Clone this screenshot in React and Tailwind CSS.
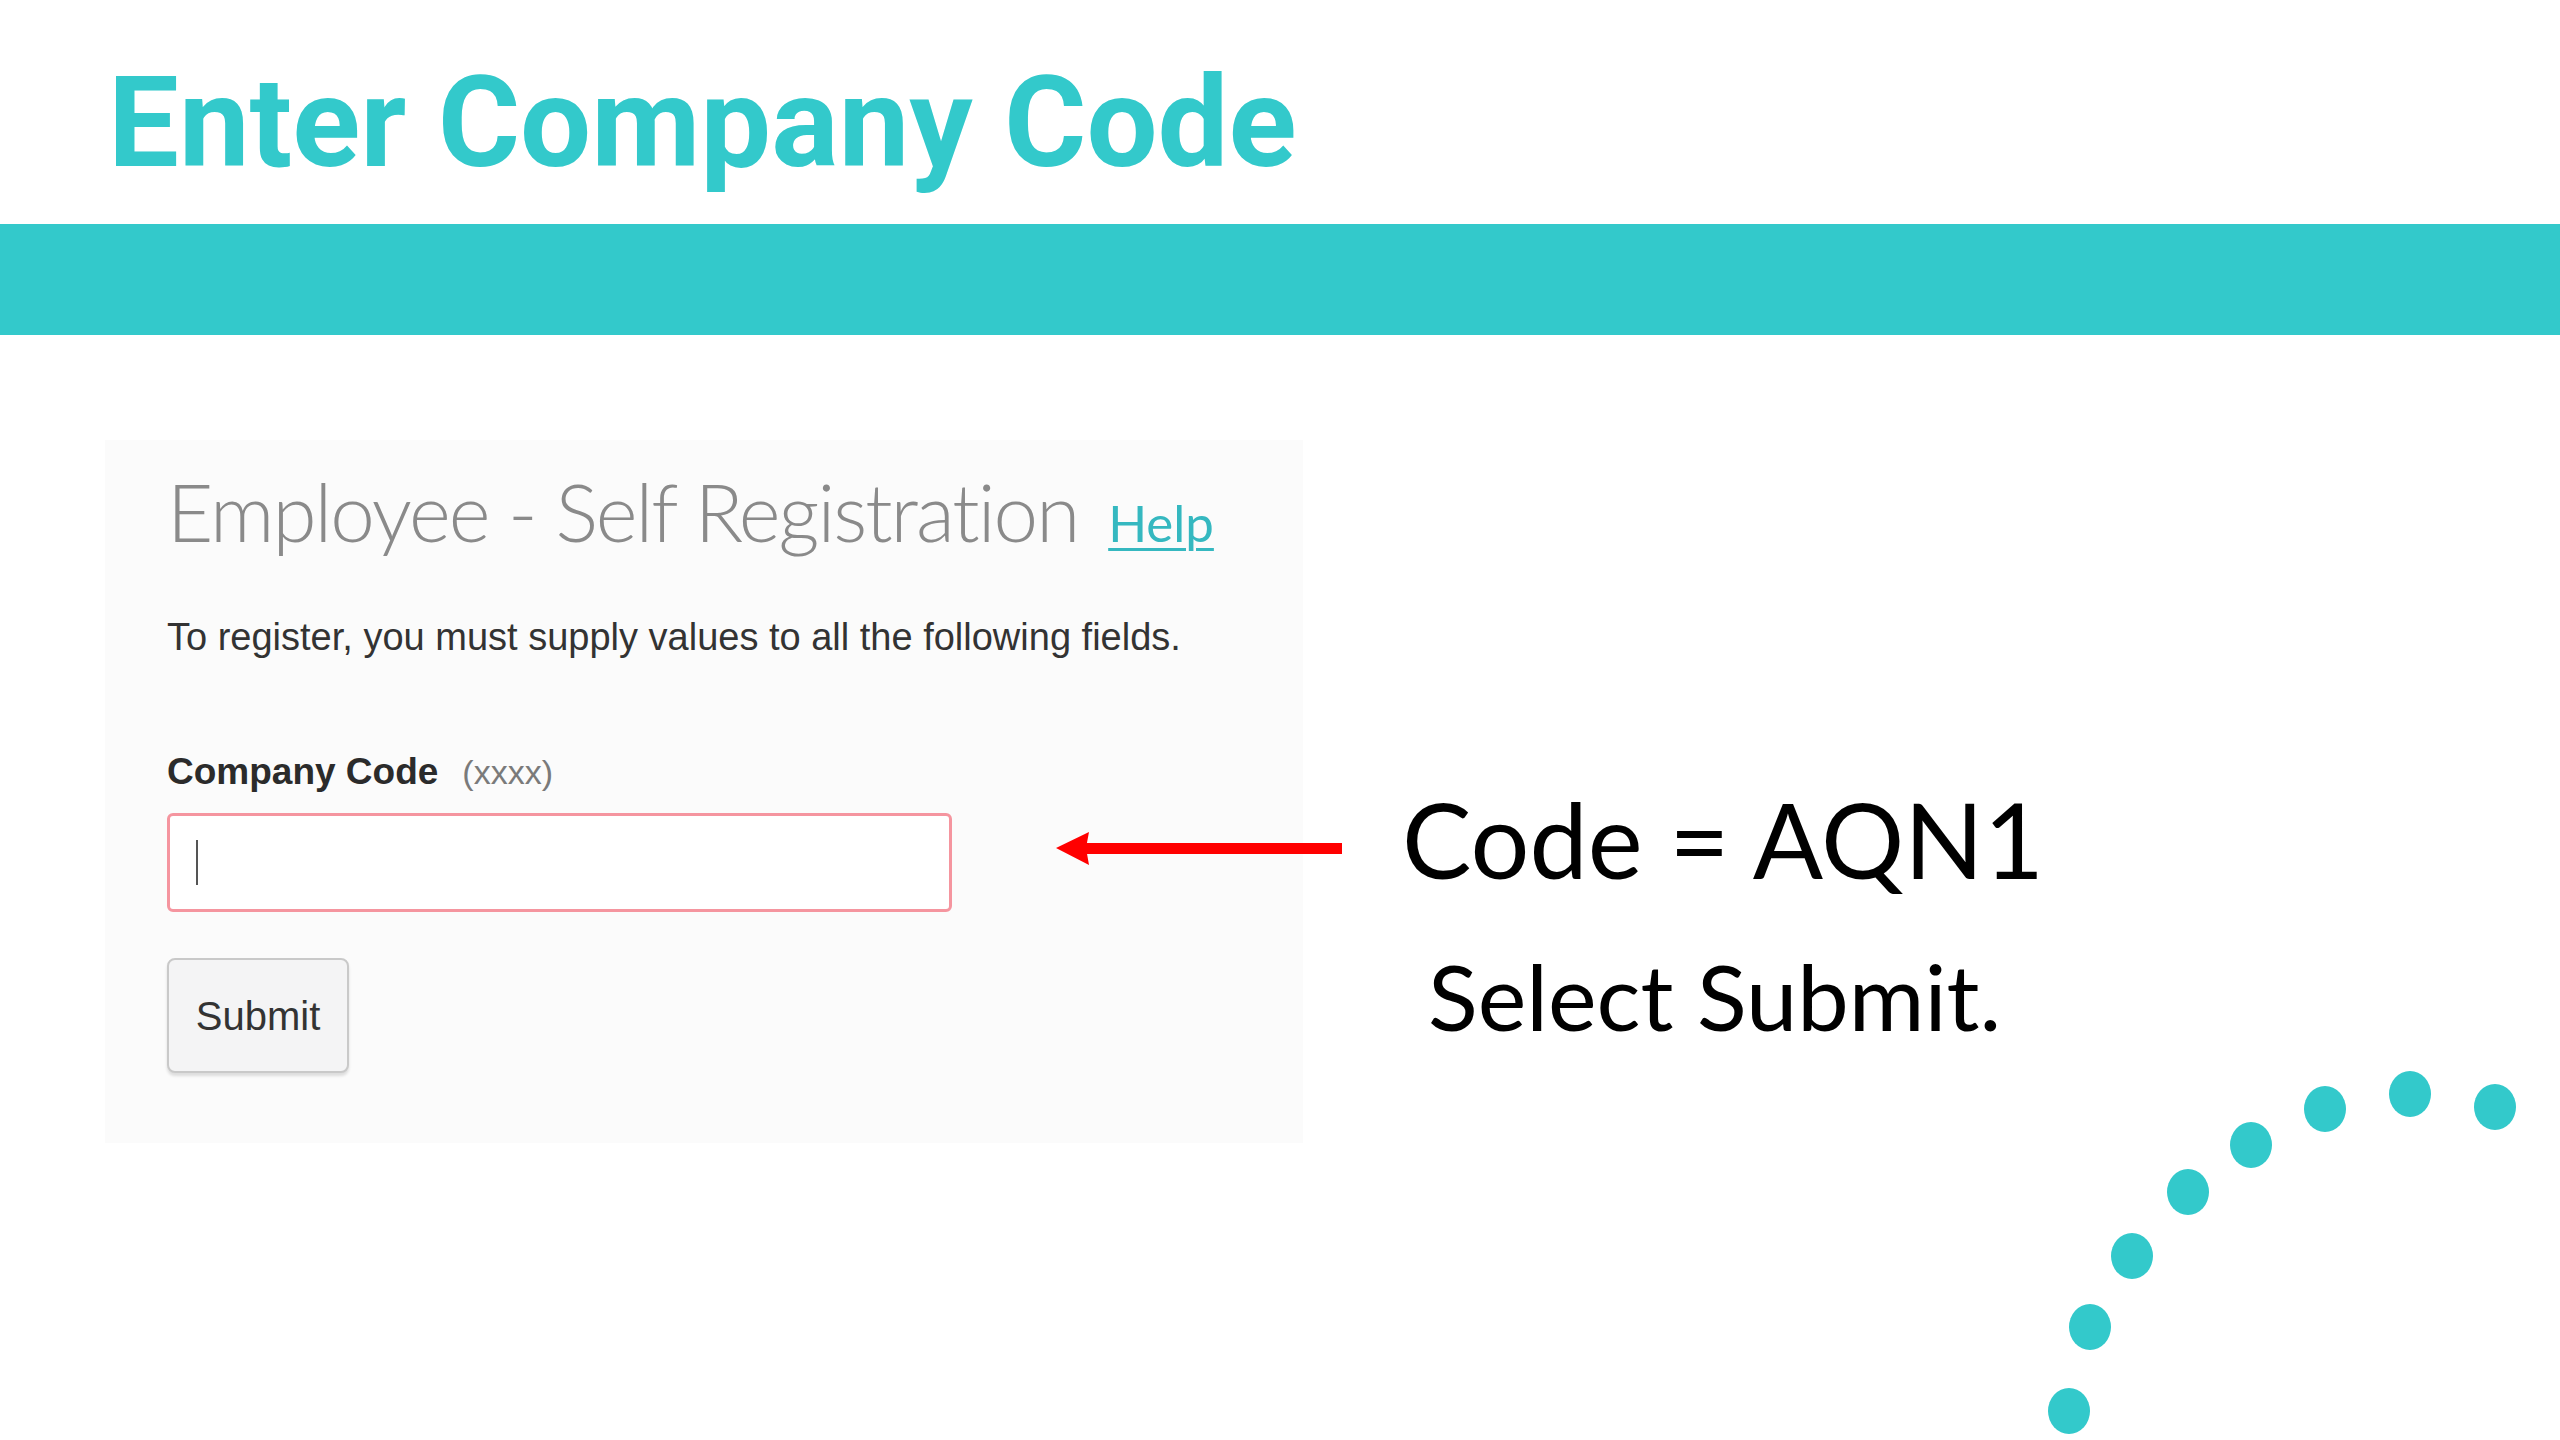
import React from "react";

const dots = [
  [69, 371],
  [90, 287],
  [132, 216],
  [188, 152],
  [251, 105],
  [325, 69],
  [410, 54],
  [495, 67],
];

const App = () => {
  return (
    <div className="relative w-[2560px] h-[1440px] bg-white overflow-hidden">
      {/* Slide title */}
      <header className="h-[224px] pl-[108px] pt-[60px]">
        <h1 className="font-['Roboto',sans-serif] font-bold text-[126px] leading-none text-[#33c9cb]">
          Enter Company Code
        </h1>
      </header>

      {/* Teal band */}
      <div className="h-[111px] bg-[#33c9cb]" />

      <main className="relative pt-[105px] pl-[105px]">
        {/* Screenshot of the registration form */}
        <section className="w-[1198px] h-[703px] bg-[#fbfbfb] pl-[62px] pt-[31px]">
          <div className="flex items-baseline gap-[30px]">
            <h2 className="font-['Lato',sans-serif] font-light text-[80px] leading-none tracking-[-2px] [font-variant-ligatures:none] text-[#8a8a8a]">
              Employee - Self Registration
            </h2>
            <a className="font-['Lato',sans-serif] text-[51px] leading-none text-[#35b8c0] underline decoration-[3px] underline-offset-[6px]">
              Help
            </a>
          </div>

          <p className="mt-[67px] font-['Liberation_Sans',Arial,sans-serif] text-[38px] leading-none text-[#333]">
            To register, you must supply values to all the following fields.
          </p>

          <div className="mt-[97px] flex items-baseline gap-[24px] font-['Liberation_Sans',Arial,sans-serif] leading-none">
            <span className="font-bold text-[37px] text-[#2b2b2b]">Company Code</span>
            <span className="text-[34px] text-[#7a7a7a]">(xxxx)</span>
          </div>

          <div className="mt-[23px] w-[785px] h-[99px] bg-white border-[3px] border-[#f5959f] rounded-[6px] pl-[26px] pt-[24px]">
            <div className="w-[2px] h-[45px] bg-[#555]" />
          </div>

          <button className="mt-[46px] w-[182px] h-[115px] bg-[#f4f4f5] border-2 border-[#c9c9c9] rounded-[8px] shadow-[0_3px_3px_rgba(0,0,0,0.12)] font-['Liberation_Sans',Arial,sans-serif] text-[40px] leading-none text-[#333]">
            Submit
          </button>
        </section>

        {/* Annotation over the form */}
        <div className="absolute left-[1050px] top-[452px] flex flex-col">
          <div className="flex items-start">
            <svg width="295" height="46" viewBox="0 0 295 46" className="mt-[38px] shrink-0">
              <polygon points="6,23 39,7 36,23 39,40" fill="#ff0000" />
              <rect x="36" y="18" width="256" height="11" fill="#ff0000" />
            </svg>
            <span className="ml-[57px] font-['Lato',sans-serif] text-[104px] leading-none text-black whitespace-nowrap">
              Code = AQN1
            </span>
          </div>
          <span className="mt-[59px] ml-[378px] font-['Lato',sans-serif] text-[92px] leading-none text-black whitespace-nowrap">
            Select Submit.
          </span>
        </div>
      </main>

      {/* Dotted arc decoration */}
      <svg
        width="560"
        height="400"
        viewBox="0 0 560 400"
        className="absolute right-0 bottom-0"
      >
        {dots.map(([cx, cy], i) => (
          <ellipse key={i} cx={cx} cy={cy} rx="21" ry="23" fill="#33c9cb" />
        ))}
      </svg>
    </div>
  );
};

export default App;
